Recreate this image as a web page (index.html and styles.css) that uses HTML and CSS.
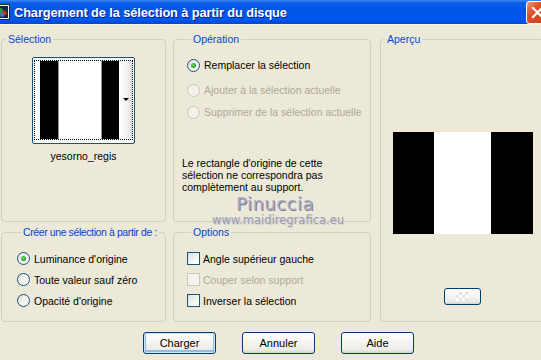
FILE: index.html
```html
<!DOCTYPE html>
<html lang="fr">
<head>
    <meta charset="UTF-8">
    <title>Chargement de la sélection à partir du disque</title>
    <link rel="stylesheet" href="styles.css">
</head>
<body>
    <div class="window">
        <div class="titlebar">
            <svg class="app-icon" width="16" height="16" viewBox="0 0 16 16">
                <rect x="0.5" y="0.5" width="15" height="15" fill="#f4f4f4" stroke="#2a2a2a"/>
                <rect x="2" y="2" width="12" height="12" fill="#142a3c"/>
                <circle cx="6" cy="7" r="3" fill="#1fa04a"/>
                <circle cx="10" cy="9" r="2.5" fill="#c0392b"/>
                <circle cx="8" cy="11" r="2" fill="#3a7bd5"/>
            </svg>
            <span class="title">Chargement de la sélection à partir du disque</span>
            <span class="close">
                <svg width="21" height="21" viewBox="0 0 21 21">
                    <path d="M6 6 L15 15 M15 6 L6 15" stroke="#fff" stroke-width="2.2" stroke-linecap="square"/>
                </svg>
            </span>
        </div>

        <div class="content">
            <div class="panels">
                <fieldset class="group selection">
                    <legend>Sélection</legend>
                    <div class="thumb">
                        <div class="thumb-focus">
                            <div class="stripe black w18"></div>
                            <div class="stripe white w44"></div>
                            <div class="stripe black w17"></div>
                            <div class="stripe fade"></div>
                        </div>
                        <span class="drop-arrow"></span>
                    </div>
                    <div class="thumb-name">yesorno_regis</div>
                </fieldset>

                <fieldset class="group operation">
                    <legend>Opération</legend>
                    <label class="row first"><span class="radio checked"></span>Remplacer la sélection</label>
                    <label class="row disabled"><span class="radio"></span>Ajouter à la sélection actuelle</label>
                    <label class="row disabled"><span class="radio"></span>Supprimer de la sélection actuelle</label>
                    <p class="note">Le rectangle d'origine de cette sélection ne correspondra pas complètement au support.</p>
                    <div class="watermark">
                        <div class="wm-name">Pinuccia</div>
                        <div class="wm-site">www.maidiregrafica.eu</div>
                    </div>
                </fieldset>

                <fieldset class="group preview">
                    <legend>Aperçu</legend>
                    <div class="preview-image">
                        <div class="stripe black w41"></div>
                        <div class="stripe white w57"></div>
                        <div class="stripe black w42"></div>
                    </div>
                    <button class="small-btn"><span class="checker"></span></button>
                </fieldset>

                <fieldset class="group create">
                    <legend class="tight">Créer une sélection à partir de :</legend>
                    <label class="row"><span class="radio checked"></span>Luminance d'origine</label>
                    <label class="row"><span class="radio"></span>Toute valeur sauf zéro</label>
                    <label class="row"><span class="radio"></span>Opacité d'origine</label>
                </fieldset>

                <fieldset class="group options">
                    <legend>Options</legend>
                    <label class="row"><span class="check"></span>Angle supérieur gauche</label>
                    <label class="row disabled"><span class="check"></span>Couper selon support</label>
                    <label class="row"><span class="check"></span>Inverser la sélection</label>
                </fieldset>
            </div>

            <div class="actions">
                <button class="btn default">Charger</button>
                <button class="btn">Annuler</button>
                <button class="btn">Aide</button>
            </div>
        </div>
    </div>
</body>
</html>
```

FILE: styles.css
```css
body {
    margin: 0;
    padding: 0;
    width: 541px;
    height: 360px;
    overflow: hidden;
    background-color: #ece9d8;
    font-family: "Liberation Sans", Arial, sans-serif;
    font-size: 10.5px;
    color: #000;
}

.window {
    width: 541px;
    height: 360px;
}

/* title bar */
.titlebar {
    height: 25px;
    display: flex;
    align-items: center;
    background: linear-gradient(to bottom, #3d8cf5 0%, #0a5ee8 12%, #0054e6 45%, #0058ee 80%, #0047d4 100%);
    border-bottom: 1px solid #f6f5ef;
    box-sizing: border-box;
    overflow: hidden;
}

.app-icon {
    margin-left: -6px;
    margin-right: 4px;
    flex-shrink: 0;
}

.title {
    color: #fff;
    font-weight: bold;
    font-size: 12.8px;
    letter-spacing: -0.1px;
    text-shadow: 1px 1px 0 #0a1f8a;
}

.close {
    margin-left: auto;
    margin-right: -8px;
    width: 21px;
    height: 21px;
    border: 1px solid #fff;
    border-radius: 3px;
    background: linear-gradient(135deg, #f09a7c 0%, #e0512b 35%, #c8401c 100%);
    display: flex;
    flex-shrink: 0;
}

/* panels */
.content {
    padding-top: 8px;
}

.panels {
    display: grid;
    grid-template-columns: 165px 198px 166px;
    grid-template-rows: 189px 96px;
    column-gap: 7px;
    row-gap: 4px;
    margin-left: 1px;
}

.group {
    margin: 0;
    padding: 0;
    min-width: 0;
    border: 1px solid #d0d0bf;
    border-radius: 4px;
    position: relative;
}

.group legend {
    color: #0046d5;
    line-height: 13px;
    padding: 0 2px;
    margin-left: 4px;
    white-space: nowrap;
}

.group legend.tight {
    letter-spacing: -0.4px;
}

.selection {
    padding-top: 11px;
    display: flex;
    flex-direction: column;
    align-items: center;
}

.thumb {
    width: 100px;
    height: 83px;
    border: 1px solid #1c5180;
    border-radius: 2px;
    background: #fff;
    padding: 2px 0 0 1px;
    box-sizing: content-box;
    position: relative;
}

.thumb-focus {
    border: 1px dotted #000;
    display: flex;
    padding-left: 5px;
    box-sizing: border-box;
    width: 99px;
    height: 80px;
}

.stripe {
    height: 100%;
}

.black { background: #000; }
.white { background: #fff; }
.w18 { width: 18px; }
.w17 { width: 17px; }
.w44 { width: 42px; border-left: 1px solid #9a9a9a; border-right: 1px solid #9a9a9a; }
.fade { width: 13px; background: linear-gradient(to right, #fff, #f2f2f2 60%, #dcdcdc); }
.w41 { width: 41px; }
.w57 { width: 57px; }
.w42 { width: 42px; }

.drop-arrow {
    position: absolute;
    right: 5px;
    top: 40px;
    border-left: 3px solid transparent;
    border-right: 3px solid transparent;
    border-top: 3px solid #000;
}

.thumb-name {
    margin-top: 6px;
    line-height: 13px;
}

/* radios and checks */
.row {
    display: flex;
    align-items: center;
    height: 22px;
}

.row.disabled {
    color: #aca899;
}

.radio {
    width: 11px;
    height: 11px;
    border: 1px solid #1c5180;
    border-radius: 50%;
    background: linear-gradient(135deg, #dcdcd7 0%, #f6f6f4 60%, #fff 100%);
    margin-right: 4px;
    flex-shrink: 0;
    display: flex;
    align-items: center;
    justify-content: center;
}

.radio.checked::after {
    content: "";
    width: 5px;
    height: 5px;
    border-radius: 50%;
    background: radial-gradient(circle at 40% 40%, #6fdc5e, #21a121 70%);
}

.disabled .radio {
    border-color: #cac8bb;
    background: #f2f1ea;
}

.check {
    width: 11px;
    height: 11px;
    border: 1px solid #1c5180;
    background: linear-gradient(135deg, #dcdcd7 0%, #f6f6f4 60%, #fff 100%);
    margin-right: 3px;
    flex-shrink: 0;
}

.disabled .check {
    border-color: #cac8bb;
    background: #f4f3ee;
}

/* operation */
.operation {
    padding: 8px 0 0 13px;
}

.operation .row.first {
    margin-bottom: 3px;
}

.note {
    margin: 34px 0 0 -5px;
    line-height: 12px;
    width: 150px;
}

.watermark {
    position: absolute;
    left: 38px;
    bottom: -6px;
    text-align: center;
    width: 126px;
}

.wm-name {
    font-family: "DejaVu Sans", sans-serif;
    font-size: 18px;
    line-height: 19px;
    color: #acacc2;
    letter-spacing: 0.5px;
    text-shadow: 1px 1px 0 #7a7a8e;
}

.wm-site {
    font-family: "DejaVu Sans", sans-serif;
    font-size: 11.5px;
    line-height: 14px;
    color: #9c9cac;
    text-shadow: 1px 1px 0 #cfcfd8;
}

/* preview */
.preview {
    grid-column: 3;
    grid-row: 1 / 3;
    margin-left: 2px;
    display: flex;
    flex-direction: column;
    align-items: center;
}

.preview-image {
    display: flex;
    width: 140px;
    height: 102px;
    margin-top: 86px;
    margin-left: 2px;
}

.small-btn {
    margin-top: 54px;
    width: 37px;
    height: 17px;
    padding: 0;
    border: 1px solid #003c74;
    border-radius: 3px;
    background: linear-gradient(to bottom, #fff, #ecebe6 85%, #d6d0c5);
    display: flex;
    align-items: center;
    justify-content: center;
}

.checker {
    width: 12px;
    height: 9px;
    background:
        linear-gradient(45deg, #e4e4e4 25%, transparent 25%, transparent 75%, #e4e4e4 75%),
        linear-gradient(45deg, #e4e4e4 25%, #fff 25%, #fff 75%, #e4e4e4 75%);
    background-size: 6px 6px;
    background-position: 0 0, 3px 3px;
}

/* create / options */
.create {
    grid-column: 1;
    grid-row: 2;
    padding: 9px 0 0 15px;
}

.create .row,
.options .row {
    height: 21px;
}

.options {
    grid-column: 2;
    grid-row: 2;
    padding: 9px 0 0 13px;
}

/* buttons */
.actions {
    display: flex;
    gap: 26px;
    padding-left: 143px;
    margin-top: 10px;
}

.btn {
    width: 73px;
    height: 22px;
    padding: 0;
    font-family: "Liberation Sans", Arial, sans-serif;
    font-size: 11px;
    color: #000;
    border: 1px solid #003c74;
    border-radius: 3px;
    background: linear-gradient(to bottom, #fff 0%, #f4f3ee 50%, #ecebe6 85%, #d6d0c5 100%);
}

.btn.default {
    box-shadow: inset 0 0 0 1px #cee7ff, inset 0 -1px 0 2px #98b8ea;
}
```
